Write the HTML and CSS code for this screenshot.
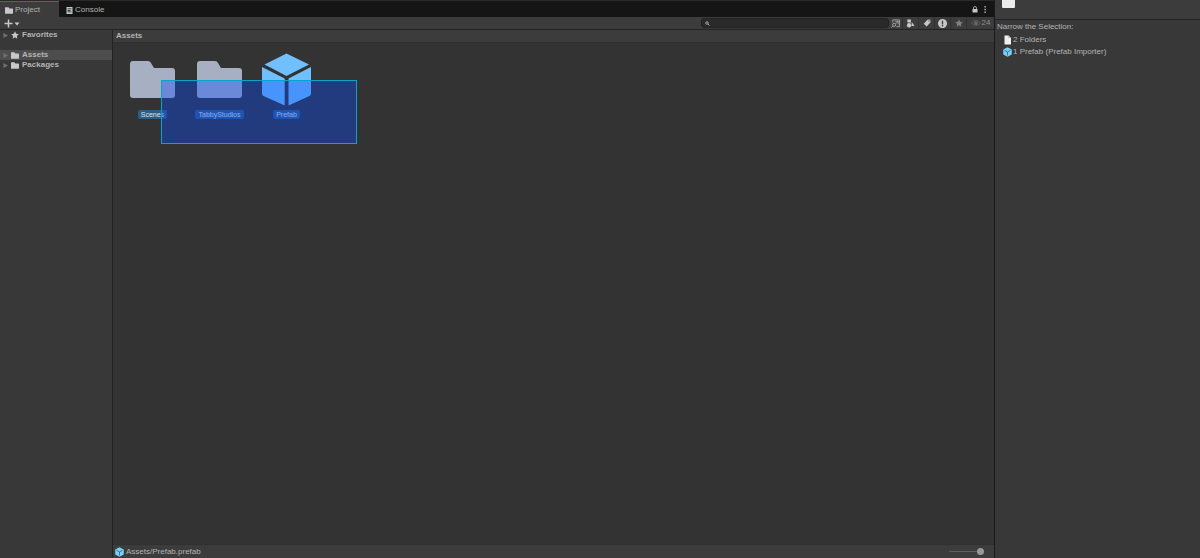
FILE: index.html
```
<!DOCTYPE html>
<html lang="en">
<head>
    <meta charset="UTF-8">
    <meta name="viewport" content="width=device-width, initial-scale=1.0">
    <title>Project</title>
    <link rel="stylesheet" href="styles.css">
</head>
<body>
    <!-- shared icon shapes -->
    <svg class="defs" aria-hidden="true">
        <symbol id="folder" viewBox="0 0 45 37">
            <path d="M3 0h15q2 0 3 2l3 5h18q3 0 3 3v24q0 3-3 3H3q-3 0-3-3V3q0-3 3-3z"/>
        </symbol>
        <symbol id="arrow" viewBox="0 0 6 6"><path d="M0.5 0L6 3L0.5 6z"/></symbol>
        <symbol id="star" viewBox="0 0 24 24"><path d="M12 1l3.4 7.4 8.1 1-6 5.5 1.6 8L12 18.9 4.900 22.900l1.600-8-6-5.500 8.100-1z"/></symbol>
        <symbol id="cube" viewBox="0 0 49 53">
            <path fill="#6fc0fc" d="M24.500 0.500L47 11.500L24.500 23L2.500 11.500z"/>
            <path fill="#6fc0fc" d="M0 14l22.700 11.500V52.500L1.500 43Q0 42 0 40.500zM49 14L26.500 25.500V52.500L47.500 43Q49 42 49 40.500z"/>
        </symbol>
        <symbol id="cube-small" viewBox="0 0 18 20">
            <path fill="#79d0f7" d="M9 0.500L17.500 5V15L9 19.500L0.500 15V5z"/>
            <path fill="none" stroke="#285b77" stroke-width="1.500" d="M3 6.500L9 10l6-3.500M9 10v7"/>
        </symbol>
    </svg>

    <div class="editor">
        <main class="project">
            <div class="tabs">
                <button class="tab active"><svg class="icon-folder"><use href="#folder"/></svg>Project</button>
                <button class="tab">
                    <svg class="icon-console" viewBox="0 0 14 14"><path fill-rule="evenodd" d="M1 0h12v14H1zM3 3v1.500h8V3zM3 6v1.500h6V6zM3 9v1.500h8V9z"/></svg>Console
                </button>
                <div class="tab-tools">
                    <button aria-label="Lock"><svg class="icon-lock" viewBox="0 0 12 14"><path d="M1 6h10v7H1z"/><path class="line" d="M3 7V4a3 3 0 0 1 6 0v3"/></svg></button>
                    <button aria-label="Menu"><svg class="icon-menu" viewBox="0 0 4 14"><path d="M1 0h2.500v3H1zM1 5.500h2.500v3H1zM1 11h2.500v3H1z"/></svg></button>
                </div>
            </div>

            <div class="toolbar">
                <button class="add" aria-label="Create">
                    <svg class="icon-add" viewBox="0 0 16 9"><path class="line" d="M4.500 0.500v8M0.500 4.500h8"/><path d="M10.500 3.500h5L13 6.500z"/></svg>
                </button>
                <label class="search">
                    <svg class="icon-search" viewBox="0 0 10 10"><circle class="line" cx="4" cy="4" r="2.500"/><path class="line" d="M6 6l3 3"/></svg>
                    <input type="search" aria-label="Search assets">
                </label>
                <div class="filters">
                    <button aria-label="Open in search"><svg viewBox="0 0 20 20"><path class="line" d="M4 8V2h15v15h-7M9 5h7v7M16 5l-6 6"/><circle class="line" cx="7" cy="13" r="3.500"/><path class="line" d="M5 15l-4 4"/></svg></button>
                    <button aria-label="Search by type"><svg viewBox="0 0 20 20"><path d="M3 1h8v7H3zM12.500 6L19 15.500h-6z"/><circle cx="7" cy="14" r="5"/></svg></button>
                    <button aria-label="Search by label"><svg class="small" viewBox="0 0 20 20"><path fill-rule="evenodd" d="M11 2l7-1 1 7-10 11-7-7zM15 3.500a1.500 1.500 0 1 0 .1 0z"/></svg></button>
                    <button aria-label="Search by import log"><svg viewBox="0 0 20 20"><path fill-rule="evenodd" d="M10 0a10 10 0 1 0 .1 0zM8.500 4h3v8h-3zM8.500 13.500h3v3h-3z"/></svg></button>
                    <button class="dim" aria-label="Save search"><svg class="small"><use href="#star"/></svg></button>
                    <button class="hidden-count"><svg class="icon-eye" viewBox="0 0 26 16"><path class="line" d="M1 8q12-13 24 0q-12 13-24 0z"/><circle cx="13" cy="8" r="5"/></svg>24</button>
                </div>
            </div>

            <div class="panes">
                <nav class="tree">
                    <a class="row" href="#"><svg class="icon-arrow"><use href="#arrow"/></svg><svg class="icon-star"><use href="#star"/></svg>Favorites</a>
                    <a class="row selected" href="#"><svg class="icon-arrow"><use href="#arrow"/></svg><svg class="icon-folder"><use href="#folder"/></svg>Assets</a>
                    <a class="row" href="#"><svg class="icon-arrow"><use href="#arrow"/></svg><svg class="icon-folder"><use href="#folder"/></svg>Packages</a>
                </nav>

                <section class="browser">
                    <h1 class="path">Assets</h1>
                    <div class="grid">
                        <div class="asset"><div class="thumb"><svg class="big-folder"><use href="#folder"/></svg></div><span class="name">Scenes</span></div>
                        <div class="asset"><div class="thumb"><svg class="big-folder"><use href="#folder"/></svg></div><span class="name">TabbyStudios</span></div>
                        <div class="asset"><div class="thumb"><svg class="big-cube"><use href="#cube"/></svg></div><span class="name">Prefab</span></div>
                        <div class="marquee"></div>
                    </div>
                    <footer class="status">
                        <svg class="icon-cube"><use href="#cube-small"/></svg>
                        <span>Assets/Prefab.prefab</span>
                        <input class="zoom" type="range" min="0" max="100" value="100" aria-label="Icon size">
                    </footer>
                </section>
            </div>
        </main>

        <aside class="inspector">
            <div class="inspector-head"><div class="preview"></div></div>
            <h2>Narrow the Selection:</h2>
            <a class="kind" href="#"><svg class="icon-cube" viewBox="0 0 18 20"><path fill="#f0f0f0" d="M3 1h8l5 5v13H3z"/><path fill="#aaa" d="M11 1l5 5h-5z"/></svg>2 Folders</a>
            <a class="kind" href="#"><svg class="icon-cube"><use href="#cube-small"/></svg>1 Prefab (Prefab Importer)</a>
        </aside>
    </div>
</body>
</html>
```
FILE: styles.css
```
* { box-sizing: border-box; }
body { margin: 0; background: #383838; color: #b4b4b4; font: 8px/10px "Liberation Sans", Arial, sans-serif; }
button { display: flex; align-items: center; padding: 0; border: none; background: none; color: inherit; font: inherit; }
a { color: inherit; text-decoration: none; }
h1, h2 { margin: 0; font-size: 8px; }
svg { flex: none; fill: #c8c8c8; }
.line { fill: none; stroke: #c8c8c8; stroke-width: 1.5; }
.defs { display: none; }

.editor { display: flex; height: 100vh; overflow: hidden; }
.project { flex: 1; min-width: 0; display: flex; flex-direction: column; border-right: 1px solid #191919; }

/* tabs */
.tabs { display: flex; height: 17px; background: #151515; border-top: 1px solid #292929; }
.tab { gap: 2px; padding: 2px 7px 0 7px; }
.tab.active { width: 59px; padding: 1px 0 0 5px; background: #3c3c3c; border-top: 1px solid #2c6da7; }
.tab-tools { display: flex; gap: 6px; margin-left: auto; padding: 1px 8px 0 0; }
.icon-folder { width: 8px; height: 7px; }
.icon-console { width: 7px; height: 7px; }
.icon-lock { width: 6px; height: 7px; }
.icon-menu { width: 2px; height: 7px; }

/* toolbar */
.toolbar { display: flex; align-items: center; height: 13px; background: #3c3c3c; border-bottom: 1px solid #232323; }
.add { padding-left: 4px; }
.icon-add { width: 16px; height: 9px; }
.search { display: flex; align-items: center; width: 188px; height: 10px; margin-left: auto; padding-left: 3px; border: 1px solid #222; border-radius: 3px; background: #2a2a2a; }
.search input { flex: 1; min-width: 0; height: 8px; padding: 0; border: none; outline: none; background: none; color: inherit; font: inherit; }
.icon-search { width: 5px; height: 5px; }
.filters { display: flex; height: 12px; }
.filters button { justify-content: center; width: 16px; border-right: 1px solid #303030; }
.filters button:first-child { width: 14px; }
.filters svg { width: 9px; height: 9px; }
.filters .small { width: 8px; height: 8px; }
.filters .dim svg { fill: #808080; }
.filters .hidden-count { gap: 1px; width: 27px; border: none; color: #909090; }
.filters .icon-eye { width: 10px; height: 6px; fill: #686868; }
.icon-eye .line { stroke: #686868; stroke-width: 2; }

.panes { flex: 1; min-height: 0; display: flex; }

/* folder tree */
.tree { width: 113px; border-right: 1px solid #232323; font-weight: 700; }
.row { display: flex; align-items: center; gap: 3px; height: 10px; padding-left: 3px; }
.row:first-child { margin-bottom: 10px; }
.row.selected { background: #4d4d4d; }
.icon-arrow { width: 5px; height: 5px; fill: #707070; }
.icon-star { width: 8px; height: 8px; }

/* asset browser */
.browser { flex: 1; min-width: 0; display: flex; flex-direction: column; background: #333; }
.path { height: 13px; padding: 1px 3px; background: #3c3c3c; border-bottom: 1px solid #303030; }
.grid { position: relative; flex: 1; display: flex; align-items: flex-start; padding: 10px 6px; }
.asset { display: flex; flex-direction: column; align-items: center; gap: 4px; width: 67px; }
.thumb { display: flex; align-items: center; height: 53px; }
.big-folder { width: 45px; height: 37px; fill: #a7afc3; }
.big-cube { width: 49px; height: 53px; }
.name { padding: 0 3px; border-radius: 2px; background: #2c5d87; color: #e0e0e0; font-size: 7px; line-height: 9px; }
.marquee { position: absolute; left: 48px; top: 37px; width: 196px; height: 64px; border: 1px solid #08a4d0; background: rgba(2, 73, 255, 0.37); }

.status { display: flex; align-items: center; gap: 2px; height: 14px; padding: 0 10px 0 2px; background: #3c3c3c; border-top: 1px solid #303030; }
.icon-cube { width: 9px; height: 10px; }
.zoom { appearance: none; width: 35px; height: 8px; margin: 0 0 0 auto; background: linear-gradient(#5e5e5e, #5e5e5e) center / 100% 1px no-repeat; }
.zoom::-webkit-slider-thumb { appearance: none; width: 7px; height: 7px; border-radius: 50%; background: #999; }

/* inspector */
.inspector { width: 205px; }
.inspector-head { height: 20px; margin-bottom: 2px; padding-left: 7px; background: #3c3c3c; border-bottom: 1px solid #222; }
.preview { width: 13px; height: 8px; border-radius: 0 0 1px 1px; background: #ececec; }
.inspector h2 { padding: 0 2px; margin-bottom: 2px; font-weight: 400; line-height: 10px; }
.kind { display: flex; align-items: center; gap: 1px; height: 12px; padding-left: 8px; }
```
